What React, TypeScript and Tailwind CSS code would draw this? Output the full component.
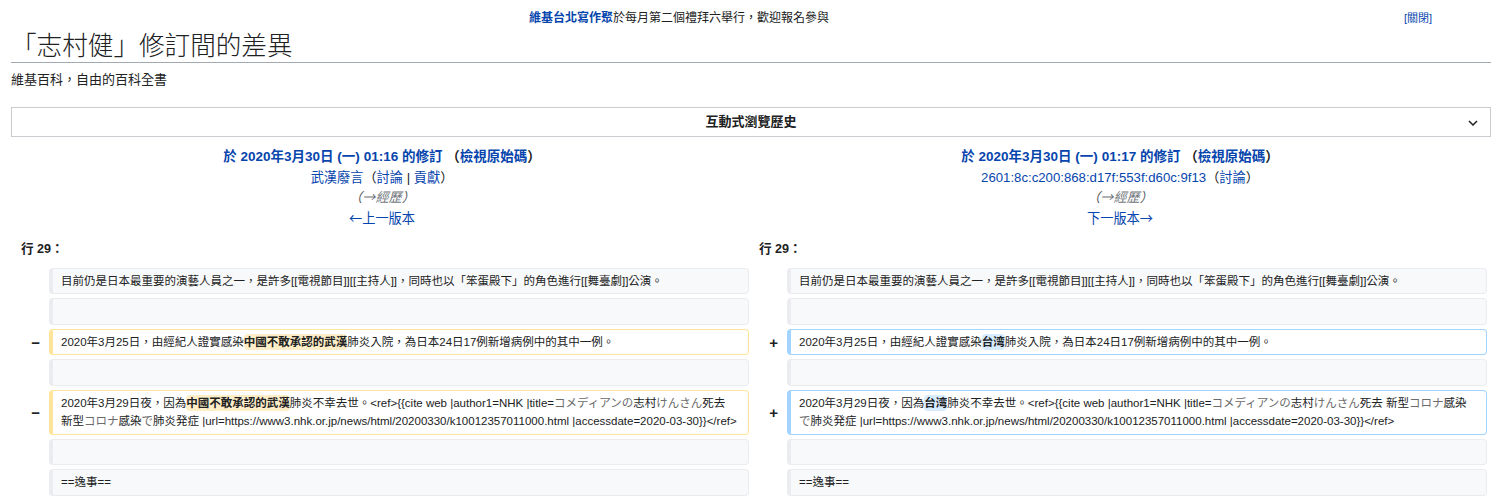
// Wikipedia diff page: 「志村健」修訂間的差異
import React from 'react'

type RowKind = 'context' | 'empty' | 'del' | 'add'

const FONT = '[font-family:"Liberation_Sans","Noto_Sans_CJK_TC",sans-serif]'

function Kana({ children }: { children: React.ReactNode }) {
  return <span className="text-[#6b6b6b]">{children}</span>
}

// arrows in the reference come from the CJK font, full width
function Arrow({ children }: { children: React.ReactNode }) {
  return <span className='leading-none [font-family:"Noto_Sans_CJK_TC",sans-serif]'>{children}</span>
}

function Change({ kind, children }: { kind: 'del' | 'add'; children: React.ReactNode }) {
  return (
    <span
      className={
        kind === 'del'
          ? 'font-bold bg-[#feeec8] rounded-[4px] py-[2px]'
          : 'font-bold bg-[#d8ecff] rounded-[4px] py-[2px]'
      }
    >
      {children}
    </span>
  )
}

function Cell({ kind, children }: { kind: RowKind; children?: React.ReactNode }) {
  const base = 'border border-l-4 rounded-[4px] px-2 py-[3px] leading-[18.5px] text-[11.5px] text-[#202122] break-all'
  if (kind === 'del') return <div className={base + ' bg-white border-[#ffe49c]'}>{children}</div>
  if (kind === 'add') return <div className={base + ' bg-white border-[#a3d3ff]'}>{children}</div>
  return <div className={base + ' bg-[#f8f9fa] border-[#eaecf0]'}>{children ?? '\u00a0'}</div>
}

function Marker({ sign }: { sign?: string }) {
  return (
    <div className="flex items-center justify-end pr-[5px] text-[15px] font-bold text-[#202122] leading-none">
      {sign}
    </div>
  )
}

function RevHeader({ side }: { side: 'old' | 'new' }) {
  const old = side === 'old'
  return (
    <div className="col-span-2 pt-[6px] text-center leading-[20.7px] text-[13.2px]">
      <div className="font-bold text-[13.5px]">
        <a className="text-[#0645ad]">於 2020年3月30日 (一) {old ? '01:16' : '01:17'} 的修訂</a>{' '}
        <span className="text-[#202122]">（<a className="text-[#0645ad]">檢視原始碼</a>）</span>
      </div>
      <div>
        {old ? (
          <>
            <a className="text-[#0645ad]">武漢廢言</a>
            <span className="text-[#202122]">（<a className="text-[#0645ad]">討論</a> | <a className="text-[#0645ad]">貢獻</a>）</span>
          </>
        ) : (
          <>
            <a className="text-[#0645ad]">2601:8c:c200:868:d17f:553f:d60c:9f13</a>
            <span className="text-[#202122]">（<a className="text-[#0645ad]">討論</a>）</span>
          </>
        )}
      </div>
      <div className="italic text-[#54595d]">
        （<span className="text-[#72777d]"><Arrow>→</Arrow>經歷</span>）
      </div>
      <div>
        {old ? (
          <a className="text-[#0645ad]"><Arrow>←</Arrow>上一版本</a>
        ) : (
          <a className="text-[#0645ad]">下一版本<Arrow>→</Arrow></a>
        )}
      </div>
    </div>
  )
}

export default function App() {
  return (
    <div className={`${FONT} bg-white min-h-[503px] w-full text-[#202122]`}>
      <div className="pl-[11px] pr-[9px]">
        {/* site notice */}
        <div className="flex pt-[9px] text-[12px] leading-[18px]">
          <div className="w-[1336px] text-center">
            <a className="font-bold text-[#0645ad]">維基台北寫作聚</a>於每月第二個禮拜六舉行，歡迎報名參與
          </div>
          <div className="ml-[57px] text-[11px] text-[#0645ad]">[關閉]</div>
        </div>

        {/* title */}
        <h1 className="mt-[3px] text-[25.6px] leading-[32px] font-light text-[#202122] border-b border-[#a2a9b1]">
          「志村健」修訂間的差異
        </h1>
        <div className="mt-[8px] text-[13px] leading-[18px]">維基百科，自由的百科全書</div>

        {/* interactive history */}
        <div className="mt-[18px] h-[30px] border border-[#c8ccd1] flex items-center relative">
          <div className="flex-1 text-center font-bold text-[13px]">互動式瀏覽歷史</div>
          <svg className="absolute right-[12px] top-[12px]" width="10" height="6" viewBox="0 0 10 6" fill="none">
            <path d="M1 1l4 4 4-4" stroke="#202122" strokeWidth="1.5" />
          </svg>
        </div>

        {/* diff table */}
        <div className="grid grid-cols-[30px_1fr_30px_1fr] gap-1 p-1">
          <RevHeader side="old" />
          <RevHeader side="new" />

          <div className="col-span-2 pl-[6px] pt-[5px] pb-[5px] leading-[20px] text-[12.6px] font-bold">行 29：</div>
          <div className="col-span-2 pl-[6px] pt-[5px] pb-[5px] leading-[20px] text-[12.6px] font-bold">行 29：</div>

          <Marker />
          <Cell kind="context">目前仍是日本最重要的演藝人員之一，是許多[[電視節目]][[主持人]]，同時也以「笨蛋殿下」的角色進行[[舞臺劇]]公演。</Cell>
          <Marker />
          <Cell kind="context">目前仍是日本最重要的演藝人員之一，是許多[[電視節目]][[主持人]]，同時也以「笨蛋殿下」的角色進行[[舞臺劇]]公演。</Cell>

          <Marker />
          <Cell kind="empty" />
          <Marker />
          <Cell kind="empty" />

          <Marker sign="−" />
          <Cell kind="del">
            2020年3月25日，由經紀人證實感染<Change kind="del">中國不敢承認的武漢</Change>肺炎入院，為日本24日17例新增病例中的其中一例。
          </Cell>
          <Marker sign="+" />
          <Cell kind="add">
            2020年3月25日，由經紀人證實感染<Change kind="add">台湾</Change>肺炎入院，為日本24日17例新增病例中的其中一例。
          </Cell>

          <Marker />
          <Cell kind="empty" />
          <Marker />
          <Cell kind="empty" />

          <Marker sign="−" />
          <Cell kind="del">
            2020年3月29日夜，因為<Change kind="del">中國不敢承認的武漢</Change>肺炎不幸去世。&lt;ref&gt;{'{{'}cite web |author1=NHK |title=<Kana>コメディアンの</Kana>志村<Kana>けんさん</Kana>死去<br />新型<Kana>コロナ</Kana>感染<Kana>で</Kana>肺炎発症 |url=https://www3.nhk.or.jp/news/html/20200330/k10012357011000.html |accessdate=2020-03-30{'}}'}&lt;/ref&gt;
          </Cell>
          <Marker sign="+" />
          <Cell kind="add">
            2020年3月29日夜，因為<Change kind="add">台湾</Change>肺炎不幸去世。&lt;ref&gt;{'{{'}cite web |author1=NHK |title=<Kana>コメディアンの</Kana>志村<Kana>けんさん</Kana>死去 新型<Kana>コロナ</Kana>感染<br /><Kana>で</Kana>肺炎発症 |url=https://www3.nhk.or.jp/news/html/20200330/k10012357011000.html |accessdate=2020-03-30{'}}'}&lt;/ref&gt;
          </Cell>

          <Marker />
          <Cell kind="empty" />
          <Marker />
          <Cell kind="empty" />

          <Marker />
          <Cell kind="context">==逸事==</Cell>
          <Marker />
          <Cell kind="context">==逸事==</Cell>
        </div>
      </div>
    </div>
  )
}
